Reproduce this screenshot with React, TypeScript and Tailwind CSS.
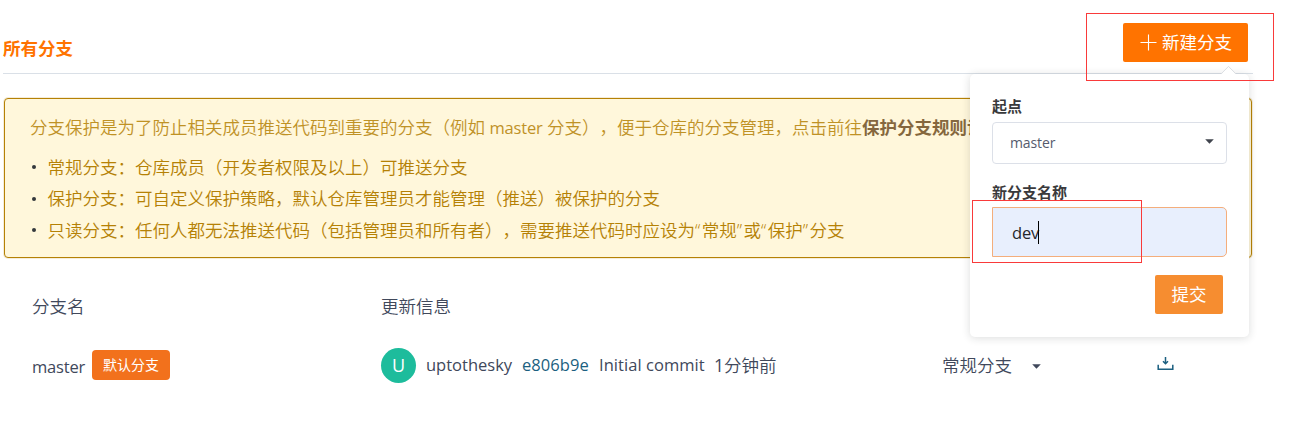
import React from "react";

const rules = [
  "常规分支：仓库成员（开发者权限及以上）可推送分支",
  "保护分支：可自定义保护策略，默认仓库管理员才能管理（推送）被保护的分支",
];

function Caret({ className }: { className: string }) {
  return (
    <svg className={className} width="9" height="5" viewBox="0 0 9 5" fill="currentColor">
      <path d="M0.2 0.3h8.6L4.5 4.8z" />
    </svg>
  );
}

function DownloadIcon() {
  return (
    <svg width="17" height="15" viewBox="0 0 17 15" fill="none" stroke="#1b5f80" strokeWidth="1.5">
      <path d="M1.2 8.7v4.6h14.6V8.7" />
      <path d="M8.5 1v6.6M6 5.3l2.5 2.5L11 5.3" />
    </svg>
  );
}

function Quoted({ children }: { children: string }) {
  return (
    <>
      <span className="tracking-[1.5px]">“</span>
      {children}
      <span className="tracking-[1.5px]">”</span>
    </>
  );
}

function Rule({ children }: { children: React.ReactNode }) {
  return (
    <li className="flex h-[31.5px] items-center">
      <span className="mt-px mr-[12px] ml-[1.5px] h-[4px] w-[4px] rounded-full bg-[#33383c]" />
      <span>{children}</span>
    </li>
  );
}

function CreatePopover() {
  return (
    <div className="absolute top-[74px] left-[970px] h-[263px] w-[279px] rounded-[5px] bg-white px-[22px] pt-[21px] shadow-[0_1px_8px_rgba(34,36,38,0.16)]">
      <svg className="absolute -top-[9px] left-[250px]" width="17" height="10" viewBox="0 0 17 10">
        <path d="M0.5 10L8.5 1.5L16.5 10z" fill="#fff" />
        <path d="M1 9L8.5 1.4L16 9" fill="none" stroke="#dcdfe3" />
      </svg>
      <div className="h-[22px] text-[15px] leading-[22px] font-bold text-[#3a3a3c]">起点</div>
      <div className="mt-[5px] flex h-[42px] w-[235px] items-center justify-between rounded-[4px] border border-[#dce0e8] pr-[12px] pl-[17px] text-[14px] font-normal text-[#555b6d]">
        <span className="-mt-[2px] tracking-[-0.1px]">master</span>
        <Caret className="mb-[3px] text-[#40444d]" />
      </div>
      <div className="mt-[18px] h-[21px] text-[15px] leading-[21px] font-bold text-[#3a3a3c]">新分支名称</div>
      <div className="mt-[4px] flex h-[50px] w-[235px] items-center rounded-r-[5px] border border-[#f4ae7c] bg-[#e8effd] pl-[19px] text-[16.5px] font-normal text-[#25262b]">
        <span className="mt-[2px] tracking-[-0.2px]">dev</span>
        <span className="-ml-px h-[23px] w-px bg-black" />
      </div>
      <button className="mt-[18px] ml-[163px] block h-[39px] w-[68px] rounded-[2px] bg-[#f68d30] text-[17.5px] font-normal text-white">
        提交
      </button>
    </div>
  );
}

export default function App() {
  return (
    <div className="relative h-[439px] w-[1305px] overflow-hidden bg-white font-['Open_Sans','Noto_Sans_CJK_SC',sans-serif] text-[17.5px] font-[350] whitespace-nowrap text-[#40485b] [text-spacing-trim:space-all]">
      <div className="ml-[3px] flex h-[74px] w-[1250px] items-start justify-between border-b border-[#dae0e7] pr-[5px]">
        <h1 className="mt-[35px] text-[17.5px] leading-[26px] font-bold text-[#ff7300]">所有分支</h1>
        <button className="mt-[23px] flex h-[39px] w-[125px] items-center rounded-[2px] bg-[#ff7300] pl-[17px] text-[17.5px] font-normal text-white">
          <svg className="mr-[5px]" width="17" height="17" viewBox="0 0 17 17" stroke="white" strokeWidth="1.1">
            <path d="M8.5 0.5v16M0.5 8.5h16" />
          </svg>
          新建分支
        </button>
      </div>

      <section className="mt-[24px] ml-[4px] h-[160px] w-[1248px] overflow-hidden rounded-[4px] border border-[#b58105] bg-[#fff7db] pt-[15px] pl-[25px] text-[#b58105] shadow-[0_0_0_1px_rgba(181,129,5,0.15)]">
        <p className="h-[26px] leading-[26px] opacity-85">
          分支保护是为了防止相关成员推送代码到重要的分支（例如{" "}
          <span className="text-[16.5px] font-normal tracking-[-0.2px]">master</span> 分支），便于仓库的分支管理，点击前往
          <strong className="font-bold text-[#704f23]">保护分支规则设置</strong>
        </p>
        <ul className="mt-[11px]">
          {rules.map((rule) => (
            <Rule key={rule}>{rule}</Rule>
          ))}
          <Rule>
            只读分支：任何人都无法推送代码（包括管理员和所有者），需要推送代码时应设为<Quoted>常规</Quoted>或<Quoted>保护</Quoted>分支
          </Rule>
        </ul>
      </section>

      <div className="mt-[35px] ml-[32px] flex h-[26px] items-center">
        <span className="w-[349px]">分支名</span>
        <span>更新信息</span>
      </div>

      <div className="mt-[28px] ml-[32px] flex h-[37px] items-center">
        <div className="flex w-[349px] items-center">
          <span className="mt-[3px] w-[60px] text-[16.5px] font-normal tracking-[-0.2px]">master</span>
          <span className="-mt-[2px] flex h-[30px] w-[78px] items-center justify-center rounded-[4px] bg-[#f2711c] text-[14px] font-normal text-white">
            默认分支
          </span>
        </div>
        <div className="flex w-[561px] items-center">
          <span className="flex h-[35px] w-[35px] items-center justify-center rounded-full bg-[#1dbc9c] text-[18px] font-medium text-white">
            U
          </span>
          <span className="ml-[10px] w-[96px] text-[16.5px] font-normal">uptothesky</span>
          <span className="w-[77px] text-[16.5px] font-normal tracking-[0.05px] text-[#1b5f80]">e806b9e</span>
          <span className="w-[115px] text-[16.5px] font-normal tracking-[0.05px]">Initial commit</span>
          <span>
            <span className="font-normal">1</span>分钟前
          </span>
        </div>
        <div className="flex w-[215px] items-center">
          <span>常规分支</span>
          <Caret className="mt-[1px] ml-[20px]" />
        </div>
        <div className="-mt-[4px]">
          <DownloadIcon />
        </div>
      </div>

      <CreatePopover />
      <div className="absolute top-[13px] left-[1086px] h-[68px] w-[188px] border border-[#f93a3a]" />
      <div className="absolute top-[200px] left-[972px] h-[63px] w-[170px] border border-[#f93a3a]" />
    </div>
  );
}
